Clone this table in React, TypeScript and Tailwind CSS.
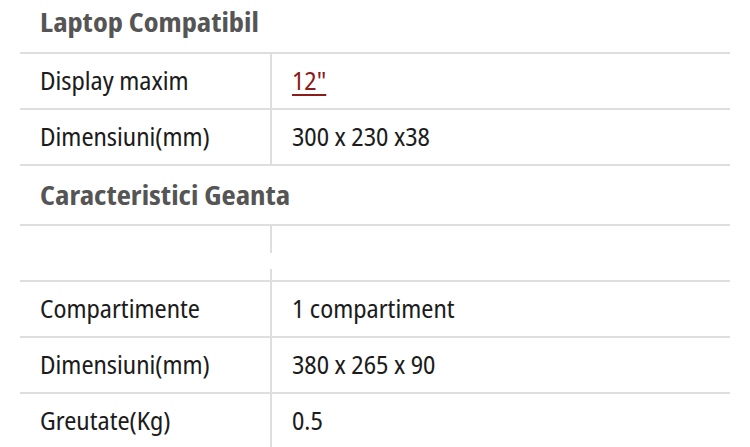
const font = { fontFamily: "'Noto Sans Display', 'Noto Sans', sans-serif" };

function Row({ label, children }: { label: string; children?: React.ReactNode }) {
  return (
    <div className="flex border-t-2 border-[#dedede] h-[56px]">
      <div className="w-[252px] shrink-0 border-r-2 border-[#dedede] pl-[20px] flex items-center">
        {label}
      </div>
      <div className="flex-1 pl-[20px] flex items-center">{children}</div>
    </div>
  );
}

export default function App() {
  return (
    <div
      className="w-[750px] h-[447px] overflow-hidden bg-white text-[25px] text-[#1c1c1c] [font-stretch:75%]"
      style={font}
    >
      <div className="mx-[20px] -mt-[7px]">
        <div className="h-[59px] flex items-center pl-[20px] font-bold text-[27px] text-[#555555]">
          Laptop Compatibil
        </div>
        <Row label="Display maxim">
          <a href="#" className="text-[#8a1c1c] underline underline-offset-[4px] decoration-[1.5px]">
            12"
          </a>
        </Row>
        <Row label="Dimensiuni(mm)">300 x 230 x38</Row>
        <div className="h-[60px] border-t-2 border-[#dedede] flex items-center pl-[20px] font-bold text-[27px] text-[#555555]">
          Caracteristici Geanta
        </div>
        <div className="flex border-t-2 border-[#dedede] h-[56px]">
          <div className="w-[252px] shrink-0 flex flex-col">
            <div className="h-[27px] border-r-2 border-[#dedede]" />
            <div className="h-[16px]" />
            <div className="flex-1 border-r-2 border-[#dedede]" />
          </div>
          <div className="flex-1" />
        </div>
        <Row label="Compartimente">1 compartiment</Row>
        <Row label="Dimensiuni(mm)">380 x 265 x 90</Row>
        <Row label="Greutate(Kg)">0.5</Row>
      </div>
    </div>
  );
}
